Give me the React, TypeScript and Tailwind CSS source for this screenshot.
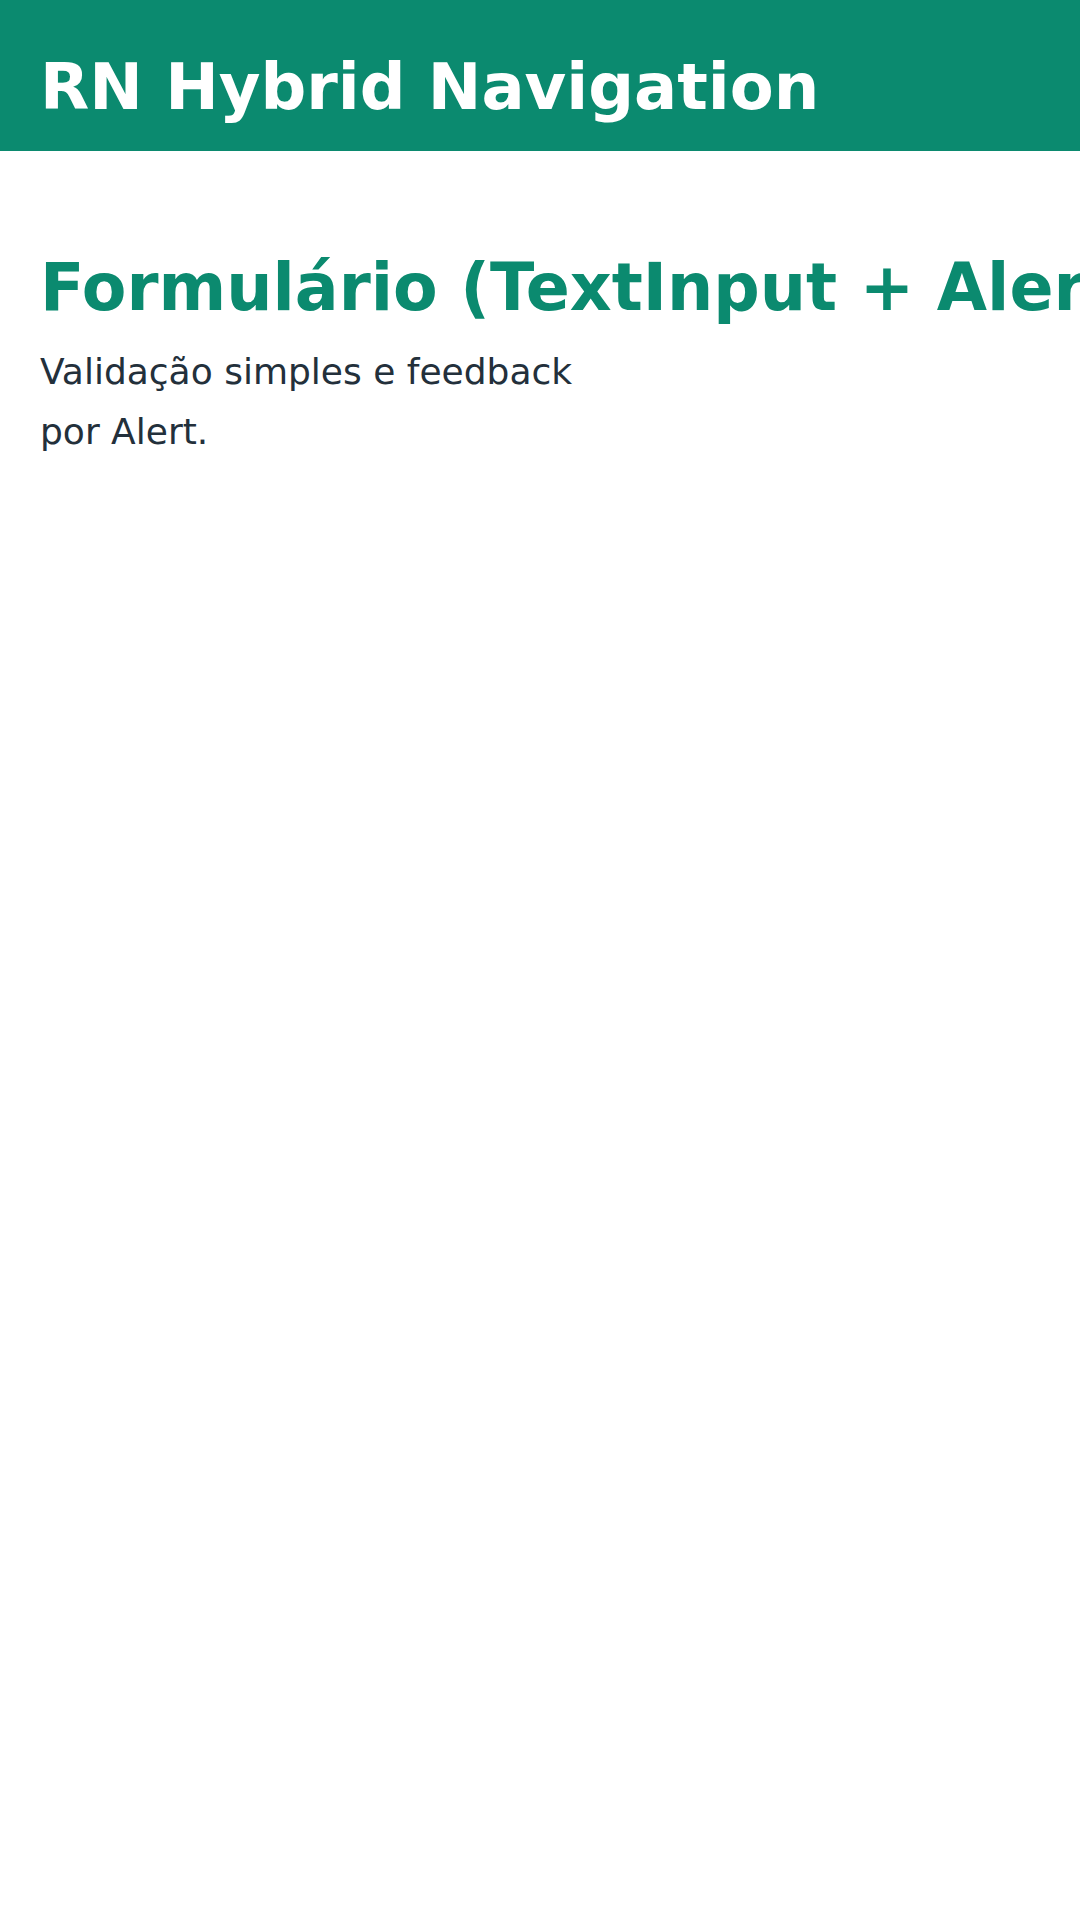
import React from 'react';

const App: React.FC = () => {
  return (
    <div className="min-h-screen bg-white overflow-hidden" style={{ fontFamily: '"DejaVu Sans", sans-serif' }}>
      {/* Header */}
      <header className="bg-[#0b8a6f] pl-[40px] pt-[50px] pb-[27px]">
        <h1 className="text-[64px] leading-[74px] font-bold text-white whitespace-nowrap">RN Hybrid Navigation</h1>
      </header>

      {/* Content */}
      <section className="pl-[40px] pt-[97px]">
        <h2 className="text-[65px] leading-[80px] font-bold text-[#0b8a6f] whitespace-nowrap">
          Formulário (TextInput + Alert)
        </h2>
        <p className="mt-[14px] w-[560px] text-[36px] leading-[60px] text-[#23303b]">
          Validação simples e feedback por Alert.
        </p>
      </section>
    </div>
  );
};

export default App;
